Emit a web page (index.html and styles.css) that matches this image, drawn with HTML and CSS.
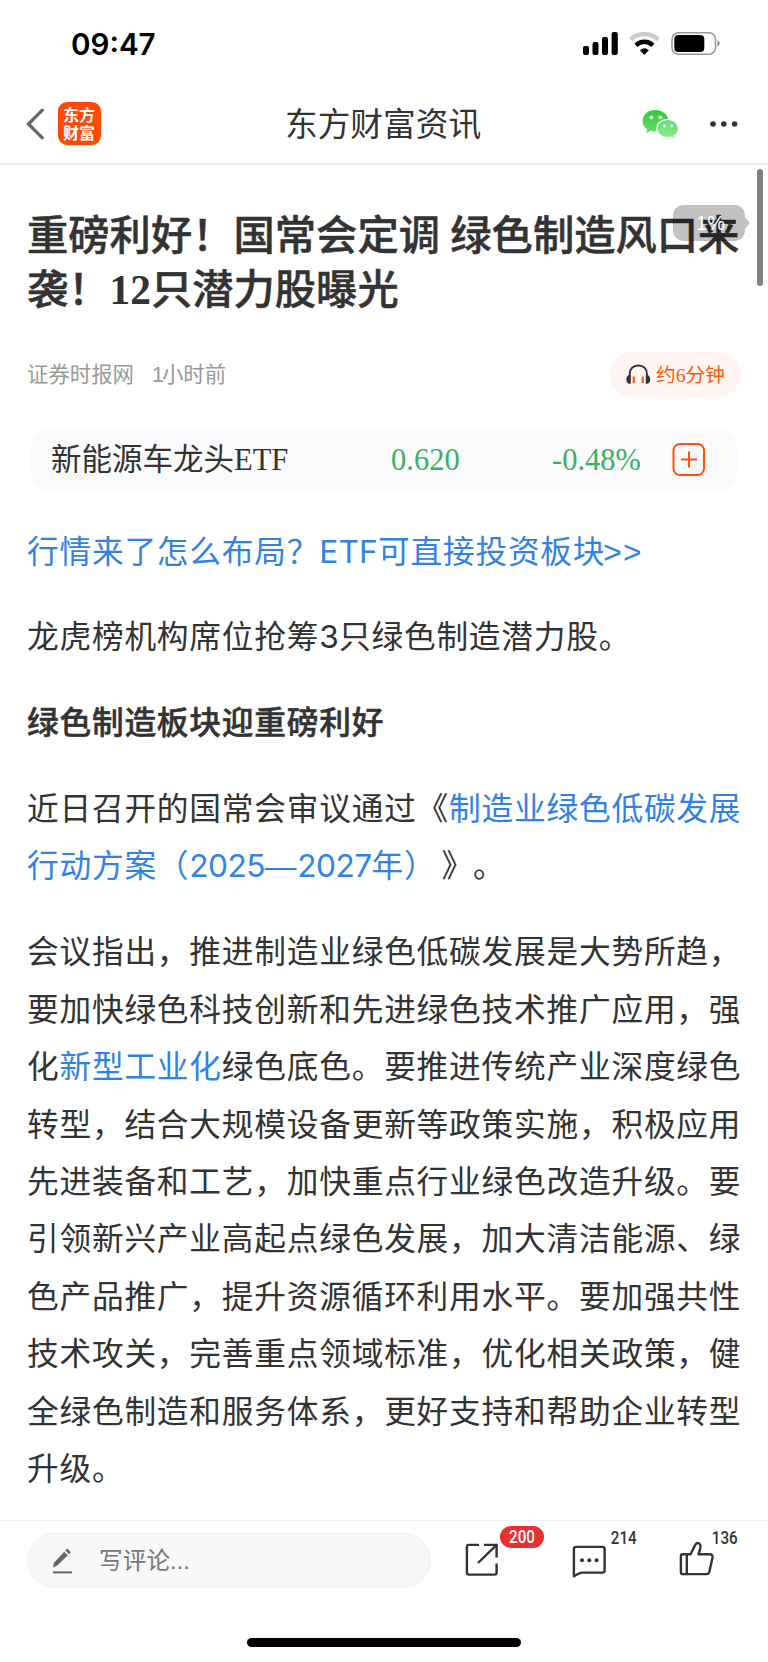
FILE: index.html
```html
<!DOCTYPE html>
<html lang="zh-CN">
<head>
<meta charset="utf-8">
<title>东方财富资讯</title>
<link rel="stylesheet" href="styles.css">
</head>
<body>
<div class="page">
  <div class="status">
    <span class="clock">09:47</span>
    <svg class="status-icons" width="140" height="26" viewBox="0 0 140 26">
      <rect x="0" y="15" width="6" height="9" rx="2"/>
      <rect x="9.5" y="11" width="6" height="13" rx="2"/>
      <rect x="19" y="6" width="6" height="18" rx="2"/>
      <rect x="28.6" y="1" width="6.2" height="23" rx="2"/>
      <g fill="none" stroke="#000" stroke-width="4.500">
        <path d="M47.600 8.700A19.500 19.500 0 0 1 75.200 8.700" stroke="#ccc"/>
        <path d="M53 14.300A12 12 0 0 1 69.800 14.300"/>
      </g>
      <path d="M61.400 24L57 19.300Q61.400 15.300 65.800 19.300Z"/>
      <rect x="89" y="1.700" width="43.500" height="21.600" rx="6.500" fill="none" stroke="#999" stroke-width="1.500"/>
      <rect x="91.300" y="4" width="30" height="17" rx="4"/>
      <path d="M134.500 9q4.400 3.500 0 7z" fill="#888"/>
    </svg>
  </div>

  <div class="navbar">
    <svg class="back" width="19" height="32" viewBox="0 0 19 32"><path d="M16.300 2.200L2.500 16L16.300 29.800" fill="none" stroke="#666" stroke-width="3.300" stroke-linecap="round" stroke-linejoin="round"/></svg>
    <div class="logo"><span>东方</span><span>财富</span></div>
    <div class="nav-title">东方财富资讯</div>
    <svg class="wechat" width="38" height="30" viewBox="0 0 38 30">
      <defs>
        <linearGradient id="wg" x1="0" y1="0" x2="0" y2="1"><stop offset="0" stop-color="#2fcb38"/><stop offset="1" stop-color="#6ade70"/></linearGradient>
        <linearGradient id="wl" x1="0" y1="0" x2="0" y2="1"><stop offset="0" stop-color="#64dc6b"/><stop offset="1" stop-color="#8dea92"/></linearGradient>
      </defs>
      <path d="M13.500 1C6 1 .6 5.800 .6 12c0 3.500 1.800 6.400 4.600 8.400L4.200 24.200l4.500-2.300c1.500.5 3.100.7 4.800.7C21 22.600 26.400 17.800 26.400 12S21 1 13.500 1z" fill="url(#wg)"/>
      <path d="M25.700 10.400c-6.100 0-10.900 4-10.900 9.100s4.800 9.100 10.900 9.100c1.400 0 2.600-.2 3.800-.5l3.500 1.700-.8-2.900c2.600-1.700 4.200-4.300 4.200-7.400 0-5.100-4.700-9.100-10.700-9.100z" fill="url(#wl)" stroke="#fff" stroke-width="1.100"/>
      <g fill="#fff"><circle cx="9.400" cy="8.300" r="1.900"/><circle cx="18.400" cy="8.300" r="1.900"/><circle cx="22.600" cy="17" r="1.400"/><circle cx="29.600" cy="17" r="1.400"/></g>
    </svg>
    <svg class="more" width="28" height="8" viewBox="0 0 28 8" fill="#333"><circle cx="3" cy="4" r="2.800"/><circle cx="13.800" cy="4" r="2.800"/><circle cx="24.600" cy="4" r="2.800"/></svg>
  </div>

  <div class="content">
    <div class="scroll-thumb"></div>
    <h1 class="headline">重磅利好！国常会定调 绿色制造风口来<br>袭！<span class="num">12</span>只潜力股曝光</h1>
    <div class="progress">1%</div>
    <div class="meta">
      <span class="source">证券时报网</span>
      <span class="time"><span class="one">1</span>小时前</span>
      <span class="listen">
        <svg width="25" height="21" viewBox="0 0 25 21">
          <path d="M3.700 13V10C3.700 4.700 7.300 1.500 12.300 1.500S20.900 4.700 20.900 10V13" fill="none" stroke="#333" stroke-width="1.900"/>
          <path d="M4.800 11v8.700H3.800C1.700 19.700.3 17.800.3 15.400S1.700 11 3.800 11zM19.800 11v8.700h1c2.100 0 3.500-1.900 3.500-4.300S22.900 11 20.800 11z" fill="#333"/>
          <path d="M7.800 12.500v6.500M16.800 12.500v6.500" stroke="#ff5a1c" stroke-width="2.200"/>
        </svg><span class="listen-text">约6分钟</span></span>
    </div>
    <div class="etf">
      <span class="etf-name">新能源车龙头ETF</span>
      <span class="etf-price">0.620</span>
      <span class="etf-change">-0.48%</span>
      <svg width="34" height="34" viewBox="0 0 34 34" fill="none" stroke="#ff4f0a" stroke-width="2"><rect x="1.500" y="1" width="30.500" height="31" rx="6.500"/><path d="M9 16.500H25M17 8.500V24.500"/></svg>
    </div>
    <div class="article">
      <p class="link">行情来了怎么布局？<span class="latin">ETF</span>可直接投资板块<span class="arrows">&gt;&gt;</span></p>
      <p>龙虎榜机构席位抢筹<span class="latin">3</span>只绿色制造潜力股。</p>
      <p class="strong">绿色制造板块迎重磅利好</p>
      <p>近日召开的国常会审议通过《<span class="link">制造业绿色低碳发展<br>行动方案（<span class="digits">2025</span>—<span class="digits">2027</span>年）</span><span class="close">》</span>。</p>
      <p>会议指出，推进制造业绿色低碳发展是大势所趋，<br>要加快绿色科技创新和先进绿色技术推广应用，强<br>化<span class="link">新型工业化</span>绿色底色。要推进传统产业深度绿色<br>转型，结合大规模设备更新等政策实施，积极应用<br>先进装备和工艺，加快重点行业绿色改造升级。要<br>引领新兴产业高起点绿色发展，加大清洁能源、绿<br>色产品推广，提升资源循环利用水平。要加强共性<br>技术攻关，完善重点领域标准，优化相关政策，健<br>全绿色制造和服务体系，更好支持和帮助企业转型<br>升级。</p>
    </div>
  </div>

  <div class="footer">
    <div class="actions">
      <div class="comment-box">
        <svg width="22" height="28" viewBox="0 0 22 28" fill="#666">
          <path d="M1 20.500L1.800 16L12.200 4.800L15.900 8.300L5.200 18.600Z"/><path d="M13.300 3.600L15.200 1.600L18.900 5.300L17 7.200Z"/><rect x="1" y="24.400" width="19" height="2"/>
        </svg>
        <span class="placeholder">写评论...</span>
      </div>
      <div class="action share">
        <svg width="34" height="34" viewBox="0 0 34 34" fill="none" stroke="#333" stroke-width="2.400"><path d="M14 1.900H4Q1.900 1.900 1.900 4V29.500Q1.900 31.600 4 31.600H29.500Q31.600 31.600 31.600 29.500V20.500M19 1.900H31.600V14.500M31.600 1.900L13 20"/></svg>
        <span class="badge"><b>200</b></span>
      </div>
      <div class="action chat">
        <svg width="34" height="34" viewBox="0 0 34 34"><path d="M1.900 31.300V4Q1.900 1.900 4 1.900H30.500Q32.600 1.900 32.600 4V25.500Q32.600 27.600 30.500 27.600H10.500Q7.500 27.600 1.900 31.300Z" fill="none" stroke="#333" stroke-width="2.400" stroke-linejoin="round"/><g fill="#333"><circle cx="10" cy="15.200" r="2"/><circle cx="17.300" cy="15.200" r="2"/><circle cx="24.600" cy="15.200" r="2"/></g></svg>
        <span class="count"><b>214</b></span>
      </div>
      <div class="action like">
        <svg width="36" height="36" viewBox="0 0 36 36" fill="none" stroke="#333" stroke-width="2.400" stroke-linejoin="round"><path d="M11.500 13.300L16.200 4Q17.500 1.300 19.800 2.300Q22 3.500 21.300 7L19.500 13.300H31Q33.900 13.600 33.500 16.700L30.300 31Q29.700 33.100 27.500 33.100H3.700Q1.900 33.100 1.900 31V15.400Q1.900 13.300 3.700 13.300Z"/><path d="M7.800 13.500V33"/></svg>
        <span class="count"><b>136</b></span>
      </div>
    </div>
    <div class="home-bar"></div>
  </div>
</div>
</body>
</html>
```
FILE: styles.css
```css
* { box-sizing: border-box; }
body {
  margin: 0;
  background: #fff;
  color: #333;
  font-family: "Liberation Sans", "Noto Sans CJK SC", sans-serif;
  text-spacing-trim: space-all;
}
svg { display: block; flex: none; }
.page { width: 768px; height: 1662px; display: flex; flex-direction: column; overflow: hidden; }

.status { height: 82px; padding: 6px 49px 0 71px; display: flex; align-items: center; justify-content: space-between; }
.clock { font: 600 29.600px/36px Inter, sans-serif; color: #000; }
.status-icons { margin-right: -4px; }

.navbar { height: 83px; padding: 2px 30px 0 26px; display: flex; align-items: center; border-bottom: 2px solid #ebebeb; }
.logo {
  width: 43px; height: 43px; margin-left: 12.500px; border-radius: 9px; background: #ff4a03; color: #fff;
  display: flex; flex-direction: column; align-items: center; justify-content: center;
  font: 700 16px/17.500px "Noto Sans CJK SC", sans-serif;
}
.nav-title { width: 200px; margin-left: 184.500px; padding-top: 2px; font-size: 32.700px; line-height: 44px; white-space: nowrap; }
.wechat { margin-left: 157px; }
.more { margin-left: auto; }

.content { position: relative; height: 1355px; padding: 44px 27px 0; }
.scroll-thumb { position: absolute; left: 757px; top: 4px; width: 5.500px; height: 117px; border-radius: 3px; background: #808080; }
.progress {
  position: absolute; left: 673px; top: 40px; width: 72px; height: 36px; border-radius: 10px;
  background: rgba(0, 0, 0, .24); color: #fff; font-size: 20px; line-height: 36px; text-align: center; padding-left: 3px;
}
.progress::after { content: ""; position: absolute; left: 72px; top: 12px; border: 6px solid transparent; border-left: 5px solid rgba(0, 0, 0, .24); border-right: 0; }
.headline {
  margin: 0; height: 108px; white-space: nowrap;
  font: 500 41.300px/54px "Liberation Serif", "Noto Sans CJK SC", sans-serif;
  -webkit-text-stroke: .5px #333;
}
.num { font-weight: 700; -webkit-text-stroke: 0; }
.meta { display: flex; align-items: center; height: 45px; margin-top: 35px; font-size: 21.400px; color: #999; }
.source, .time { padding-bottom: 4px; }
.time { margin-left: 18px; }
.one { letter-spacing: -2px; }
.listen {
  margin-left: auto; width: 131px; height: 45px; border-radius: 23px; padding-left: 16px; background: #fff5f2; color: #ff5a0a;
  display: flex; align-items: center; gap: 5px; white-space: nowrap; font: 19.700px "Liberation Serif", "Noto Sans CJK SC", sans-serif;
}
.listen-text { padding-bottom: 3px; }
.etf {
  display: grid; grid-template-columns: 340px 161px 120px 34px; align-items: center;
  height: 64px; margin: 30px 4px 0; padding: 1px 0 0 20px; border-radius: 20px; background: #fafafc;
  font: 30.500px/44px "Liberation Serif", "Noto Sans CJK SC", sans-serif; white-space: nowrap;
}
.etf-price, .etf-change { color: #3bb15f; }
.article { margin-top: 32.700px; font-size: 31.700px; line-height: 57.450px; letter-spacing: .78px; white-space: nowrap; }
.article p { margin: 0 0 28.300px; }
.link { color: #3082e8; }
.strong { font-weight: 500; -webkit-text-stroke: .5px #333; }
.latin, .digits { font-family: Inter, sans-serif; line-height: 1; }
.latin { letter-spacing: .2px; }
.digits { letter-spacing: -.6px; }
.arrows { margin-left: -2px; letter-spacing: 1.300px; }
.close { margin-left: 5px; margin-right: -1px; }

.footer { flex: 1; border-top: 1px solid #f0f0f0; }
.actions { display: flex; padding: 12px 0 0 27px; height: 117px; }
.comment-box {
  width: 404px; height: 55px; border-radius: 28px; background: #f8f8f8; border: 1px solid #f2f2f2;
  display: flex; align-items: center; padding-left: 24px; gap: 25px; color: #777; font-size: 23.700px;
}
.placeholder { padding-bottom: 4px; }
.action { position: relative; }
.share { margin: 10px 0 0 34px; }
.chat { margin: 12px 0 0 73px; }
.like { margin: 8px 0 0 73px; }
.action b { display: block; font: 500 18.500px/22px Roboto, sans-serif; transform: scaleX(.82); }
.badge { position: absolute; left: 34.500px; top: -17px; width: 44px; height: 22px; border-radius: 11px; background: #e93030; color: #fff; text-align: center; }
.count { position: absolute; left: 35.500px; top: -18px; }
.like .count { left: 29.500px; top: -14px; }
.home-bar { width: 274px; height: 9px; border-radius: 5px; background: #000; margin-left: 247px; }
```
